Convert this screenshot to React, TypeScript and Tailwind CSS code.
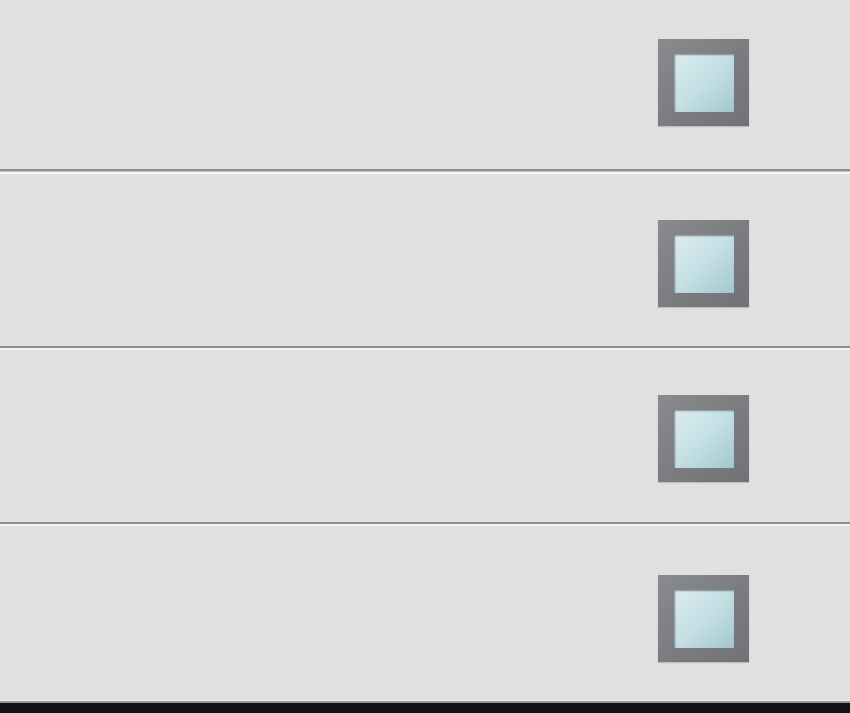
import React from 'react';

const panels = [
  { h: 'h-[169px]', mt: 'mt-[39px]', seam: 'wide' },
  { h: 'h-[172px]', mt: 'mt-[46px]', seam: 'thin' },
  { h: 'h-[172px]', mt: 'mt-[45px]', seam: 'thin' },
  { h: 'h-[174px]', mt: 'mt-[49px]', seam: 'last' },
];

const Window: React.FC = () => (
  <div className="w-[91px] h-[87px] bg-gradient-to-br from-[#898b8e] via-[#7b7d80] to-[#707275] shadow-[0_1px_1px_rgba(0,0,0,0.15)] flex items-center justify-center">
    <div className="w-[60px] h-[58px] bg-gradient-to-br from-[#dcedf0] via-[#c4dfe4] to-[#a3c8d0] shadow-[inset_1px_1px_2px_rgba(0,0,0,0.4)]" />
  </div>
);

const Seam: React.FC<{ kind: string }> = ({ kind }) => {
  if (kind === 'last') {
    return (
      <div className="flex flex-col">
        <div className="h-px bg-[#f4f4f4]" />
        <div className="h-[2px] bg-[#9a9a9a]" />
      </div>
    );
  }
  return (
    <div className="flex flex-col">
      <div className="h-[2px] bg-[#8d8d8d]" />
      {kind === 'wide' && <div className="h-px bg-[#c4c4c4]" />}
      <div className="h-[2px] bg-[#f6f6f6]" />
    </div>
  );
};

const App: React.FC = () => {
  return (
    <div className="w-[850px] h-[713px] bg-[#111318] flex flex-col overflow-hidden">
      {panels.map((p, i) => (
        <React.Fragment key={i}>
          <div className={`${p.h} bg-[#e0e0e0] flex justify-end pr-[101px]`}>
            <div className={p.mt}>
              <Window />
            </div>
          </div>
          <Seam kind={p.seam} />
        </React.Fragment>
      ))}
    </div>
  );
};

export default App;
